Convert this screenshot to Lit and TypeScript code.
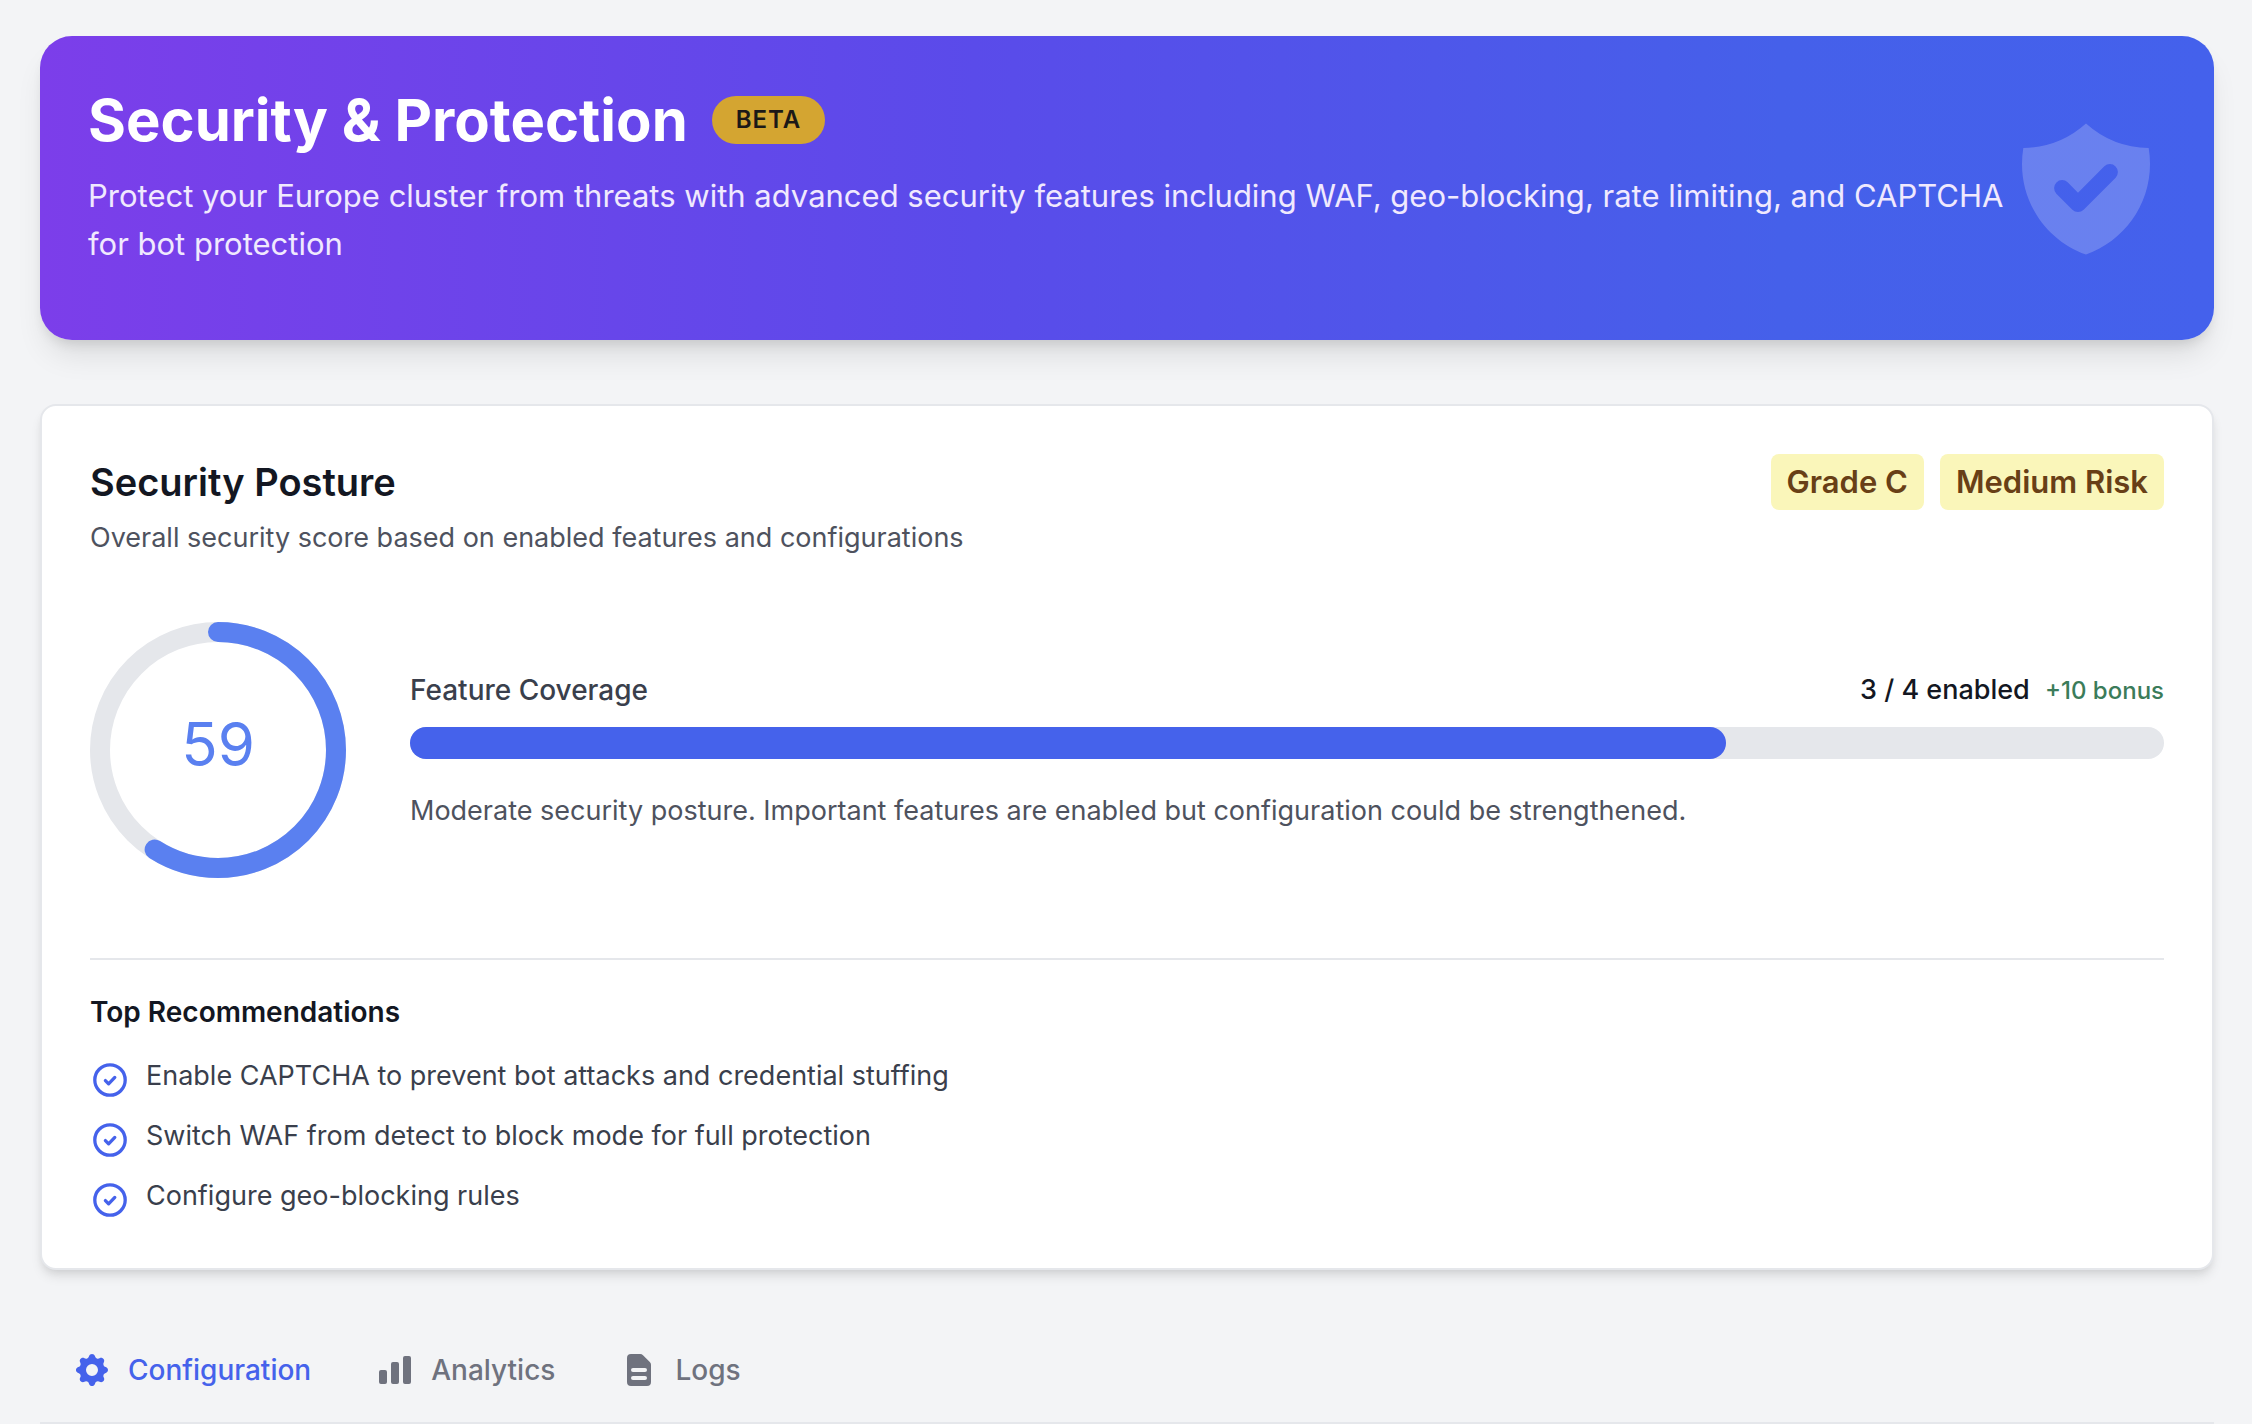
import { LitElement, html, svg, css } from "lit";
import { customElement, property, state } from "lit/decorators.js";
import { classMap } from "lit/directives/class-map.js";

const RING_RADIUS = 118;
const RING_LENGTH = 2 * Math.PI * RING_RADIUS;

const icons = {
  shield: svg`<path fill-rule="evenodd" clip-rule="evenodd" d="M2.166 4.999A11.954 11.954 0 0010 1.944 11.954 11.954 0 0017.834 5c.11.65.166 1.32.166 2.001 0 5.225-3.34 9.67-8 11.317C5.34 16.67 2 12.225 2 7c0-.682.057-1.35.166-2.001zm11.541 3.708a1 1 0 00-1.414-1.414L9 10.586 7.707 9.293a1 1 0 00-1.414 1.414l2 2a1 1 0 001.414 0l4-4z"/>`,
  cog: svg`<path fill-rule="evenodd" clip-rule="evenodd" d="M11.49 3.17c-.38-1.56-2.6-1.56-2.98 0a1.532 1.532 0 01-2.286.948c-1.372-.836-2.942.734-2.106 2.106.54.886.061 2.042-.947 2.287-1.561.379-1.561 2.6 0 2.978a1.532 1.532 0 01.947 2.287c-.836 1.372.734 2.942 2.106 2.106a1.532 1.532 0 012.287.947c.379 1.561 2.6 1.561 2.978 0a1.533 1.533 0 012.287-.947c1.372.836 2.942-.734 2.106-2.106a1.533 1.533 0 01.947-2.287c1.561-.379 1.561-2.6 0-2.978a1.532 1.532 0 01-.947-2.287c.836-1.372-.734-2.942-2.106-2.106a1.532 1.532 0 01-2.287-.947zM10 13a3 3 0 100-6 3 3 0 000 6z"/>`,
  chart: svg`<path d="M2 11a1 1 0 011-1h2a1 1 0 011 1v5a1 1 0 01-1 1H3a1 1 0 01-1-1v-5zM8 7a1 1 0 011-1h2a1 1 0 011 1v9a1 1 0 01-1 1H9a1 1 0 01-1-1V7zM14 4a1 1 0 011-1h2a1 1 0 011 1v12a1 1 0 01-1 1h-2a1 1 0 01-1-1V4z"/>`,
  document: svg`<path fill-rule="evenodd" clip-rule="evenodd" d="M4 4a2 2 0 012-2h4.586A2 2 0 0112 2.586L15.414 6A2 2 0 0116 7.414V16a2 2 0 01-2 2H6a2 2 0 01-2-2V4zm2 6a1 1 0 011-1h6a1 1 0 110 2H7a1 1 0 01-1-1zm1 3a1 1 0 100 2h6a1 1 0 100-2H7z"/>`,
};

@customElement("security-hero")
class SecurityHero extends LitElement {
  static styles = css`
    :host {
      display: block;
      border-radius: 32px;
      background: linear-gradient(to right, #7c3eea, #5a4bea 43%, #4560ea 80%, #4461ec);
      box-shadow: 0 20px 30px -6px rgba(0, 0, 0, 0.1), 0 8px 12px -4px rgba(0, 0, 0, 0.1);
      color: #fff;
    }
    .hero { display: flex; align-items: center; justify-content: space-between; padding: 48px; }
    .body { padding-bottom: 24px; }
    .heading { display: flex; align-items: center; gap: 24px; margin-bottom: 16px; }
    h1 { margin: 0; font-size: 58px; line-height: 72px; font-weight: 700; }
    .beta {
      padding: 8px 24px;
      border-radius: 24px;
      background: #d4a531;
      color: #1c1917;
      font-size: 24px;
      line-height: 32px;
      font-weight: 600;
      letter-spacing: 1px;
    }
    p { margin: 0; font-size: 31px; line-height: 48px; color: #f0e9fe; }
    .shield { flex: none; width: 160px; height: 160px; fill: #fff; opacity: 0.2; }
  `;

  render() {
    return html`
      <header class="hero">
        <div class="body">
          <div class="heading"><h1>Security &amp; Protection</h1><span class="beta">BETA</span></div>
          <p>Protect your Europe cluster from threats with advanced security features including WAF, geo-blocking, rate limiting, and CAPTCHA for bot protection</p>
        </div>
        <svg class="shield" viewBox="0 0 20 20" aria-hidden="true">${icons.shield}</svg>
      </header>
    `;
  }
}

@customElement("score-ring")
class ScoreRing extends LitElement {
  @property({ type: Number }) score = 0;

  static styles = css`
    :host { display: grid; flex: none; width: 256px; height: 256px; }
    svg, .value { grid-area: 1 / 1; }
    circle { fill: none; stroke-width: 20; }
    .track { stroke: #e5e7eb; }
    .arc { stroke: #5a80f0; stroke-linecap: round; }
    .value { padding-bottom: 12px; place-self: center; font-size: 60px; line-height: 72px; color: #5a80f0; }
  `;

  render() {
    return html`
      <svg viewBox="0 0 256 256" aria-hidden="true">
        <circle class="track" cx="128" cy="128" r=${RING_RADIUS}></circle>
        <circle class="arc" cx="128" cy="128" r=${RING_RADIUS} transform="rotate(-90 128 128)"
          stroke-dasharray="${(RING_LENGTH * this.score) / 100} ${RING_LENGTH}"></circle>
      </svg>
      <span class="value">${this.score}</span>
    `;
  }
}

@customElement("security-posture")
class SecurityPosture extends LitElement {
  @property({ type: Number }) enabled = 3;
  @property({ type: Number }) total = 4;

  private recommendations = [
    "Enable CAPTCHA to prevent bot attacks and credential stuffing",
    "Switch WAF from detect to block mode for full protection",
    "Configure geo-blocking rules",
  ];

  static styles = css`
    :host {
      display: block;
      padding: 48px;
      border: 2px solid #e5e7eb;
      border-radius: 16px;
      background: #fff;
      box-shadow: 0 8px 12px -2px rgba(0, 0, 0, 0.1), 0 4px 8px -4px rgba(0, 0, 0, 0.1);
      font-size: 27px;
      line-height: 40px;
      color: #4e525e;
    }
    h2, h3, p, ul { margin: 0; padding: 0; }
    .top { display: flex; align-items: flex-start; justify-content: space-between; margin-bottom: 64px; }
    h2 { font-size: 38px; line-height: 56px; font-weight: 600; color: #131722; margin-bottom: 8px; }
    .badges { display: flex; gap: 16px; }
    .badge {
      padding: 4px 16px;
      border-radius: 8px;
      background: #faf6ba;
      color: #683f16;
      font-size: 31px;
      line-height: 48px;
      font-weight: 600;
    }
    .score { display: flex; align-items: center; gap: 64px; margin-bottom: 80px; }
    .coverage { flex: 1; display: flex; flex-direction: column; }
    .labels { display: flex; justify-content: space-between; margin-bottom: 16px; }
    .label { font-size: 28px; font-weight: 500; color: #3a3f4c; }
    .count { font-weight: 500; color: #131722; }
    .bonus { margin-left: 8px; font-size: 24px; color: #3b7c5a; }
    .bar { height: 32px; border-radius: 16px; background: #e5e7eb; margin-bottom: 32px; }
    .fill { height: 32px; border-radius: 16px; background: #4562eb; }
    .next { padding-top: 32px; border-top: 2px solid #e5e7eb; }
    h3 { font-size: 28px; line-height: 40px; font-weight: 600; color: #131722; margin-bottom: 24px; }
    ul { display: flex; flex-direction: column; gap: 16px; list-style: none; color: #3a3f4c; }
    li { display: flex; gap: 16px; }
    .check { flex: none; width: 40px; height: 40px; margin-top: 4px; fill: none; stroke: #4562eb; stroke-linecap: round; stroke-linejoin: round; }
  `;

  render() {
    const share = (this.enabled / this.total) * 100;
    return html`
      <div class="top">
        <div>
          <h2>Security Posture</h2>
          <p>Overall security score based on enabled features and configurations</p>
        </div>
        <div class="badges"><span class="badge">Grade C</span><span class="badge">Medium Risk</span></div>
      </div>
      <div class="score">
        <score-ring .score=${59}></score-ring>
        <div class="coverage">
          <div class="labels">
            <span class="label">Feature Coverage</span>
            <span class="count">${this.enabled} / ${this.total} enabled <span class="bonus">+10 bonus</span></span>
          </div>
          <div class="bar" role="progressbar" aria-valuenow=${share} aria-valuemin="0" aria-valuemax="100">
            <div class="fill" style="width: ${share}%"></div>
          </div>
          <p>Moderate security posture. Important features are enabled but configuration could be strengthened.</p>
        </div>
      </div>
      <section class="next">
        <h3>Top Recommendations</h3>
        <ul>
          ${this.recommendations.map(
            (text) => html`<li>
              <svg class="check" viewBox="0 0 40 40" aria-hidden="true">
                <circle cx="20" cy="20" r="15.2" stroke-width="3.3"></circle>
                <path d="M15.4 20.6l3.2 3.2 6.2-6.4" stroke-width="3.3"></path>
              </svg>
              <span>${text}</span>
            </li>`
          )}
        </ul>
      </section>
    `;
  }
}

@customElement("section-tabs")
class SectionTabs extends LitElement {
  @state() private active = "Configuration";

  private tabs = [
    { name: "Configuration", icon: icons.cog },
    { name: "Analytics", icon: icons.chart },
    { name: "Logs", icon: icons.document },
  ];

  static styles = css`
    :host { display: block; border-bottom: 2px solid #e5e7eb; }
    .tabs { display: flex; }
    .tab {
      display: flex;
      align-items: center;
      gap: 16px;
      padding: 32px;
      border: 0;
      background: none;
      color: #6f727e;
      font: inherit;
      font-size: 28px;
      line-height: 40px;
      font-weight: 500;
      cursor: pointer;
    }
    .active { color: #4562eb; }
    .icon { width: 40px; height: 40px; fill: currentColor; }
  `;

  render() {
    return html`
      <nav class="tabs" role="tablist">
        ${this.tabs.map(
          (tab) => html`<button
            class=${classMap({ tab: true, active: tab.name === this.active })}
            role="tab"
            aria-selected=${tab.name === this.active}
            @click=${() => (this.active = tab.name)}
          >
            <svg class="icon" viewBox="0 0 20 20" aria-hidden="true">${tab.icon}</svg>${tab.name}
          </button>`
        )}
      </nav>
    `;
  }
}

@customElement("app-root")
class AppRoot extends LitElement {
  static styles = css`
    :host {
      display: block;
      box-sizing: border-box;
      min-height: 100vh;
      padding: 36px 38px 0 40px;
      background: #f3f4f6;
      font-family: Inter, "Liberation Sans", sans-serif;
    }
    .page { display: flex; flex-direction: column; }
    security-hero { margin-bottom: 64px; }
    security-posture { margin-bottom: 48px; }
  `;

  render() {
    return html`
      <main class="page">
        <security-hero></security-hero>
        <security-posture></security-posture>
        <section-tabs></section-tabs>
      </main>
    `;
  }
}
